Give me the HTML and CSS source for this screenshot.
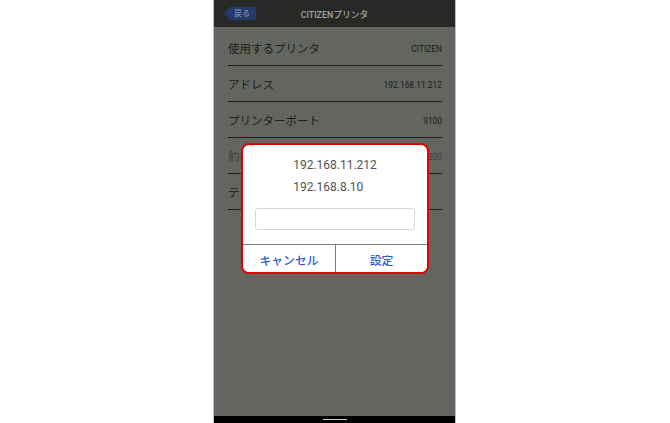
FILE: index.html
```html
<!DOCTYPE html>
<html lang="ja">
<head>
<meta charset="utf-8">
<title>CITIZENプリンタ</title>
<link rel="stylesheet" href="styles.css">
</head>
<body>
<div class="phone">
  <header class="header">
    <div class="back"><span class="back-tag">戻る</span></div>
    <div class="title">CITIZENプリンタ</div>
    <div></div>
  </header>
  <main class="content">
    <ul class="list">
      <li class="row"><span class="label">使用するプリンタ</span><span class="value">CITIZEN</span></li>
      <li class="row"><span class="label">アドレス</span><span class="value">192.168.11.212</span></li>
      <li class="row"><span class="label">プリンターポート</span><span class="value">9100</span></li>
      <li class="row dim"><span class="label">釣銭機接続</span><span class="value">200</span></li>
      <li class="row"><span class="label">テスト印刷</span><span class="value"></span></li>
    </ul>
  </main>
  <div class="navbar"><span class="home"></span></div>
  <div class="dialog">
    <div class="dialog-body">
      <ul class="options">
        <li>192.168.11.212</li>
        <li>192.168.8.10</li>
      </ul>
      <div class="input"></div>
    </div>
    <div class="buttons">
      <button class="btn">キャンセル</button>
      <button class="btn">設定</button>
    </div>
  </div>
</div>
</body>
</html>
```

FILE: styles.css
```css
* { box-sizing: border-box; }
html, body { margin: 0; padding: 0; background: #ffffff; }
body {
  width: 670px;
  height: 423px;
  overflow: hidden;
  font-family: Roboto, "Noto Sans CJK JP", sans-serif;
}
.phone {
  position: relative;
  margin-left: 213px;
  width: 243px;
  height: 423px;
  border-left: 1px solid #bdbdbd;
  border-right: 1px solid #bdbdbd;
  display: flex;
  flex-direction: column;
  background: #636561;
}
.header {
  height: 27px;
  background: #272927;
  display: grid;
  grid-template-columns: 1fr auto 1fr;
  align-items: center;
}
.back { padding-left: 10px; display: flex; }
.back-tag {
  display: inline-flex;
  align-items: center;
  justify-content: center;
  width: 32px;
  height: 13px;
  padding-left: 4px;
  background: #233a6b;
  clip-path: polygon(6px 0, 100% 0, 100% 100%, 6px 100%, 0 50%);
  color: #8f9bb9;
  font-size: 8px;
  line-height: 13px;
}
.title {
  color: #a2a4a1;
  font-size: 8.8px;
  font-weight: 500;
  line-height: 12px;
  padding-top: 2px;
}
.content { flex: 1; }
.list {
  list-style: none;
  margin: 0;
  padding: 3px 13px 0 14px;
}
.row {
  height: 36px;
  padding-top: 2px;
  border-bottom: 1px solid #1d1e1d;
  display: flex;
  align-items: center;
  justify-content: space-between;
  color: #1b1c1b;
}
.label { font-size: 11.5px; line-height: 14px; }
.value { font-size: 8.4px; line-height: 10px; }
.row.dim { color: #3e3f3d; }
.navbar {
  height: 7px;
  background: #000000;
  display: flex;
  justify-content: center;
  align-items: center;
}
.home {
  width: 24px;
  height: 1.5px;
  background: #cfcfcf;
}
.dialog {
  position: absolute;
  left: 27px;
  top: 143px;
  width: 188px;
  height: 131px;
  border: 2px solid #e50000;
  border-radius: 8px;
  background: #ffffff;
  display: flex;
  flex-direction: column;
  overflow: hidden;
}
.dialog-body {
  padding: 9px 12px 14px;
  display: flex;
  flex-direction: column;
  align-items: center;
  border-bottom: 1px solid #7d7d7d;
}
.options {
  list-style: none;
  margin: 0;
  padding: 0;
  color: #525252;
  font-size: 12px;
  line-height: 22px;
}
.input {
  margin-top: 10px;
  width: 160px;
  height: 22px;
  border: 1px solid #d8d8d8;
  border-radius: 3px;
  background: #ffffff;
}
.buttons {
  flex: 1;
  display: grid;
  grid-template-columns: 1fr 1fr;
}
.btn {
  border: 0;
  margin: 0;
  padding: 2px 0 0;
  background: #ffffff;
  color: #2e5bd0;
  font-family: Roboto, "Noto Sans CJK JP", sans-serif;
  font-size: 11.8px;
  font-weight: 500;
}
.btn + .btn { border-left: 1px solid #7d7d7d; }
```
